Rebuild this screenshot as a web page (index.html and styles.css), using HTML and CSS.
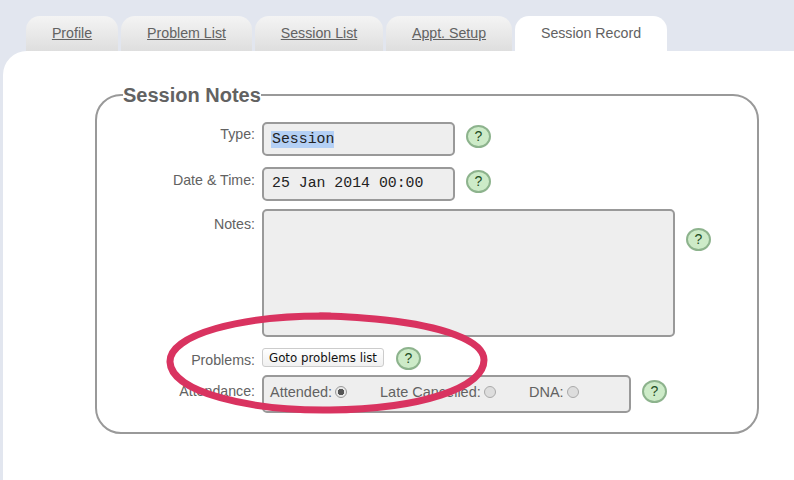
FILE: index.html
```html
<!DOCTYPE html>
<html lang="en">

<head>
    <meta charset="UTF-8">
    <meta name="viewport" content="width=device-width, initial-scale=1.0">
    <title>Session Record</title>
    <link rel="stylesheet" href="styles.css">
</head>

<body>
    <nav class="tabs">
        <a class="tab tab-profile" href="#">Profile</a>
        <a class="tab tab-problems" href="#">Problem List</a>
        <a class="tab tab-sessions" href="#">Session List</a>
        <a class="tab tab-appt" href="#">Appt. Setup</a>
        <a class="tab tab-active" href="#">Session Record</a>
    </nav>

    <main class="panel">
        <fieldset class="notes">
            <legend>Session Notes</legend>

            <div class="row row-type">
                <span class="label">Type:</span>
                <div class="field field-short"><span class="selected">Session</span></div>
                <button class="help" type="button">?</button>
            </div>

            <div class="row row-date">
                <span class="label">Date &amp; Time:</span>
                <div class="field field-short">25 Jan 2014 00:00</div>
                <button class="help" type="button">?</button>
            </div>

            <div class="row row-notes">
                <span class="label">Notes:</span>
                <div class="field field-area"></div>
                <button class="help help-notes" type="button">?</button>
            </div>

            <div class="row row-problems">
                <span class="label">Problems:</span>
                <button class="goto" type="button">Goto problems list</button>
                <button class="help" type="button">?</button>
            </div>

            <div class="row row-attendance">
                <span class="label">Attendance:</span>
                <div class="field field-radios">
                    <span class="option option-attended">Attended:<i class="radio radio-on"></i></span>
                    <span class="option option-late">Late Cancelled:<i class="radio"></i></span>
                    <span class="option">DNA:<i class="radio"></i></span>
                </div>
                <button class="help" type="button">?</button>
            </div>
        </fieldset>
    </main>

    <!-- hand drawn ring over the problems row -->
    <svg class="ring" width="794" height="480" viewBox="0 0 794 480">
        <path d="M330 316 C240 315 169 335 170 362 C171 392 250 411 330 410 C420 409 484 388 484 360 C484 340 440 326 385 320 C365 318 345 316 320 316" fill="none" stroke="#d93360" stroke-width="7" stroke-linecap="round" />
    </svg>
</body>

</html>
```

FILE: styles.css
```css
* {
    box-sizing: border-box;
}

html,
body {
    height: 100%;
}

body {
    margin: 0;
    overflow: hidden;
    background-color: #E2E6EF;
    font-family: "Liberation Sans", Arial, sans-serif;
    font-size: 14.2px;
    color: #626262;
}

.tabs {
    display: flex;
    gap: 3px;
    height: 51px;
    padding: 16px 0 0 26px;
}

.tab {
    display: flex;
    justify-content: center;
    padding-top: 9px;
    height: 35px;
    border-radius: 14px 14px 0 0;
    background: linear-gradient(#F4F4F4, #DEDEDE);
    color: #626262;
}

.tab-profile {
    width: 92px;
}

.tab-problems {
    width: 131px;
}

.tab-sessions {
    width: 128px;
}

.tab-appt {
    width: 126px;
}

.tab-active {
    width: 152px;
    background: #fff;
    text-decoration: none;
}

.panel {
    height: 429px;
    margin-left: 3px;
    padding: 34px 0 0 92px;
    border-top-left-radius: 24px;
    background-color: #fff;
}

.notes {
    position: relative;
    width: 664px;
    height: 349px;
    margin: 0;
    padding: 17px 0 0;
    border: 2px solid #999;
    border-radius: 26px;
}

.notes legend {
    margin-left: 26px;
    padding: 0;
    font-size: 20px;
    font-weight: bold;
    line-height: 20px;
}

.row {
    display: flex;
    align-items: flex-start;
}

.label {
    flex-shrink: 0;
    width: 158px;
    margin-right: 7px;
    text-align: right;
}

.field {
    flex-shrink: 0;
    border: 2px solid #999;
    border-radius: 5px;
    background-color: #EEE;
}

.field-short {
    width: 193px;
    height: 34px;
    padding: 6px 0 0 8px;
    font-family: "Liberation Mono", "Courier New", monospace;
    font-size: 14.85px;
    line-height: 17px;
    color: #222;
}

.selected {
    display: inline-block;
    margin: 1px 0 0 -1px;
    padding-left: 1px;
    background-color: #B4D0F5;
}

.field-area {
    width: 413px;
    height: 128px;
}

.field-radios {
    display: flex;
    width: 369px;
    height: 38px;
    padding: 6px 0 0 6px;
    font-size: 14.5px;
}

.option {
    display: flex;
    align-items: center;
    height: 18px;
}

.option-attended {
    width: 110px;
}

.option-late {
    width: 149px;
}

.radio {
    width: 12px;
    height: 12px;
    margin-left: 3px;
    border: 1px solid #aaa;
    border-radius: 50%;
    background-color: #DDD;
}

.radio-on {
    border-color: #999;
    background: radial-gradient(circle, #555 0 3px, #E8E8E8 3.5px);
}

.help {
    flex-shrink: 0;
    width: 25px;
    height: 23px;
    margin: 3px 0 0 11px;
    padding: 0;
    border: 2px solid #8DB38D;
    border-radius: 50%;
    background-color: #CDEBC8;
    font-family: "Liberation Sans", Arial, sans-serif;
    font-size: 14px;
    line-height: 19px;
    color: #1F4D1F;
}

.help-notes {
    margin-top: 19px;
}

.goto {
    flex-shrink: 0;
    width: 122px;
    height: 19px;
    padding: 0;
    border: 1px solid #CCC;
    border-radius: 3px;
    background: linear-gradient(#fff, #F0F0F0);
    font-family: "DejaVu Sans", Verdana, sans-serif;
    font-size: 11.8px;
    line-height: 18px;
    color: #111;
}

.row-type .label {
    padding-top: 4px;
}

.row-date {
    margin-top: 11px;
}

.row-date .label {
    padding-top: 5px;
}

.row-notes {
    margin-top: 8px;
}

.row-notes .label {
    padding-top: 7px;
}

.row-problems {
    margin-top: 11px;
    height: 27px;
}

.row-problems .label {
    padding-top: 4px;
}

.row-problems .help {
    margin: -1px 0 0 12px;
}

.row-attendance .label {
    padding-top: 8px;
}

.row-attendance .help {
    margin-top: 5px;
}

.ring {
    position: absolute;
    top: 0;
    left: 0;
    pointer-events: none;
}
```
